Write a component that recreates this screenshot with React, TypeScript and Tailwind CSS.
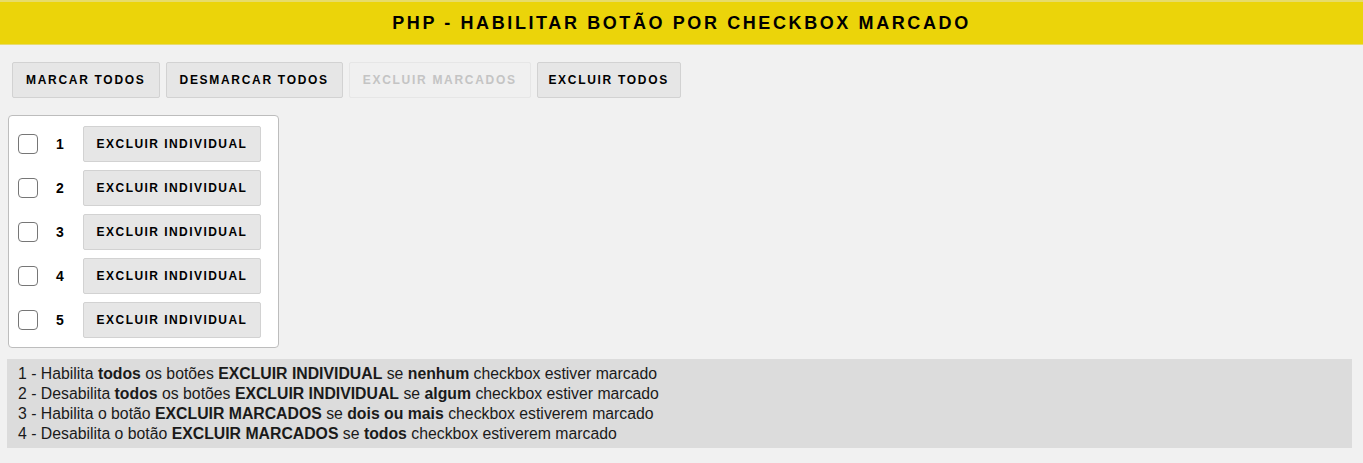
import { useState } from 'react';

const ITEMS = [1, 2, 3, 4, 5];

const btn =
  'h-9 rounded-[2px] border text-[12px] font-bold tracking-[1.7px] whitespace-nowrap';

export default function App() {
  const [checked, setChecked] = useState<number[]>([]);

  const toggle = (n: number) =>
    setChecked(c => (c.includes(n) ? c.filter(x => x !== n) : [...c, n]));

  // regras do rodapé
  const anyChecked = checked.length > 0;
  const canDeleteMarked = checked.length >= 2 && checked.length < ITEMS.length;

  return (
    <div className="min-h-[463px] bg-[#f1f1f1] font-['Liberation_Sans',Arial,sans-serif] text-black">
      {/* cabeçalho */}
      <div className="border-t-2 border-[#e7dc6a] bg-[#ebd40a] border-b border-b-[#e8dc70] h-[45px] flex items-center justify-center">
        <h1 className="text-[18px] font-bold tracking-[2.6px]">PHP - HABILITAR BOTÃO POR CHECKBOX MARCADO</h1>
      </div>

      {/* ações gerais */}
      <div className="flex gap-1.5 px-3 pt-[17px]">
        <button onClick={() => setChecked(ITEMS)} className={`${btn} px-[13px] bg-[#e6e6e6] border-[#d2d2d2]`}>
          MARCAR TODOS
        </button>
        <button onClick={() => setChecked([])} className={`${btn} px-[13px] bg-[#e6e6e6] border-[#d2d2d2]`}>
          DESMARCAR TODOS
        </button>
        <button
          disabled={!canDeleteMarked}
          className={`${btn} px-[13px] ${canDeleteMarked ? 'bg-[#e6e6e6] border-[#d2d2d2]' : 'bg-[#f0f0f0] border-[#e6e6e6] text-[#c4c4c4]'}`}
        >
          EXCLUIR MARCADOS
        </button>
        <button className={`${btn} w-[144px] bg-[#e6e6e6] border-[#d2d2d2]`}>EXCLUIR TODOS</button>
      </div>

      {/* lista */}
      <div className="ml-2 mt-[17px] w-[271px] bg-white border border-[#bdbdbd] rounded-[4px] pl-[9px] pt-[10px] pb-[9px] flex flex-col gap-2">
        {ITEMS.map(n => (
          <div key={n} className="flex items-center h-9">
            <button
              onClick={() => toggle(n)}
              className={`w-5 h-5 rounded-[4px] border-[1.5px] border-[#767676] ${checked.includes(n) ? 'bg-[#0075ff] border-[#0075ff]' : 'bg-white'}`}
            />
            <span className="w-[45px] pl-[18px] text-[14px] font-bold">{n}</span>
            <button
              disabled={anyChecked}
              className={`h-9 w-[178px] rounded-[2px] border text-[12px] font-bold tracking-[1.45px] whitespace-nowrap ${anyChecked ? 'bg-[#f0f0f0] border-[#e6e6e6] text-[#c4c4c4]' : 'bg-[#e6e6e6] border-[#d2d2d2]'}`}
            >
              EXCLUIR INDIVIDUAL
            </button>
          </div>
        ))}
      </div>

      {/* regras */}
      <div className="mx-[7px] mt-[11px] w-[1345px] bg-[#dcdcdc] px-[11px] pt-[5px] pb-[4px] text-[15.8px] leading-[20px] text-[#1a1a1a]">
        <p>1 - Habilita <b>todos</b> os botões <b>EXCLUIR INDIVIDUAL</b> se <b>nenhum</b> checkbox estiver marcado</p>
        <p>2 - Desabilita <b>todos</b> os botões <b>EXCLUIR INDIVIDUAL</b> se <b>algum</b> checkbox estiver marcado</p>
        <p>3 - Habilita o botão <b>EXCLUIR MARCADOS</b> se <b>dois ou mais</b> checkbox estiverem marcado</p>
        <p>4 - Desabilita o botão <b>EXCLUIR MARCADOS</b> se <b>todos</b> checkbox estiverem marcado</p>
      </div>
    </div>
  );
}
